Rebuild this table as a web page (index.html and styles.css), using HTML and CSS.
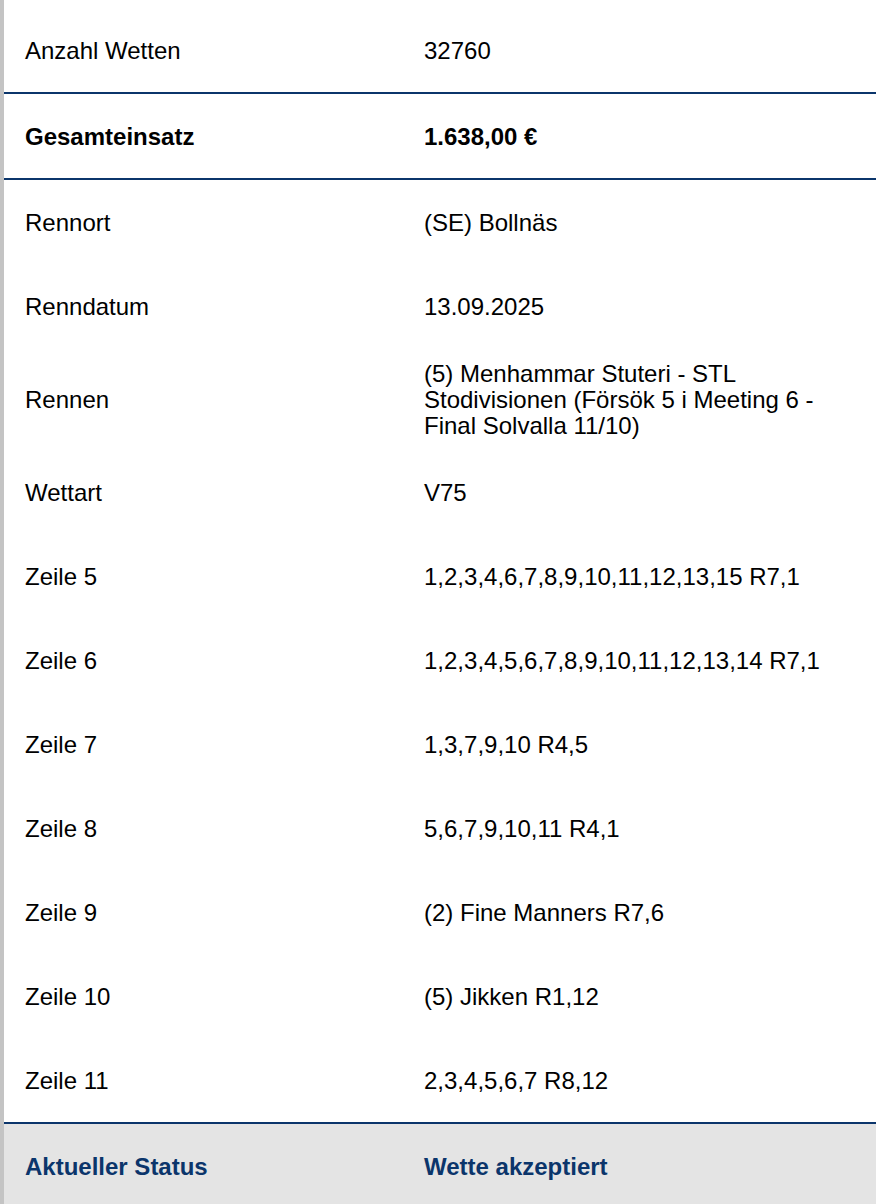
FILE: index.html
```html
<!DOCTYPE html>
<html lang="de">
<head>
<meta charset="utf-8">
<title>Wettdetails</title>
<link rel="stylesheet" href="styles.css">
</head>
<body>
<div class="panel">
  <div class="row"><div class="label">Anzahl Wetten</div><div class="value">32760</div></div>
  <div class="row sep strong"><div class="label">Gesamteinsatz</div><div class="value">1.638,00 €</div></div>
  <div class="row sep"><div class="label">Rennort</div><div class="value">(SE) Bollnäs</div></div>
  <div class="row"><div class="label">Renndatum</div><div class="value">13.09.2025</div></div>
  <div class="row"><div class="label">Rennen</div><div class="value">(5) Menhammar Stuteri - STL Stodivisionen (Försök 5 i Meeting 6 - Final Solvalla 11/10)</div></div>
  <div class="row"><div class="label">Wettart</div><div class="value">V75</div></div>
  <div class="row"><div class="label">Zeile 5</div><div class="value">1,2,3,4,6,7,8,9,10,11,12,13,15 R7,1</div></div>
  <div class="row"><div class="label">Zeile 6</div><div class="value">1,2,3,4,5,6,7,8,9,10,11,12,13,14 R7,1</div></div>
  <div class="row"><div class="label">Zeile 7</div><div class="value">1,3,7,9,10 R4,5</div></div>
  <div class="row"><div class="label">Zeile 8</div><div class="value">5,6,7,9,10,11 R4,1</div></div>
  <div class="row"><div class="label">Zeile 9</div><div class="value">(2) Fine Manners R7,6</div></div>
  <div class="row"><div class="label">Zeile 10</div><div class="value">(5) Jikken R1,12</div></div>
  <div class="row"><div class="label">Zeile 11</div><div class="value">2,3,4,5,6,7 R8,12</div></div>
  <div class="row sep status"><div class="label">Aktueller Status</div><div class="value">Wette akzeptiert</div></div>
</div>
</body>
</html>
```
FILE: styles.css
```css
html, body {
  margin: 0;
  padding: 0;
  background: #ffffff;
}
body {
  font-family: "Liberation Sans", Arial, Helvetica, sans-serif;
  font-size: 24px;
  line-height: 26px;
  color: #000000;
}
.panel {
  border-left: 4px solid #c4c4c4;
  padding-top: 8px;
  min-height: 1196px;
}
.row {
  display: grid;
  grid-template-columns: 420px 1fr;
  align-items: center;
  min-height: 60px;
  box-sizing: content-box;
  padding: 13px 20px 11px 0;
}
.row.sep {
  border-top: 2px solid #0b356b;
}
.label {
  padding-left: 21px;
}
.strong {
  font-weight: bold;
}
.status {
  background: #e4e4e4;
  color: #0b356b;
  font-weight: bold;
}
```
